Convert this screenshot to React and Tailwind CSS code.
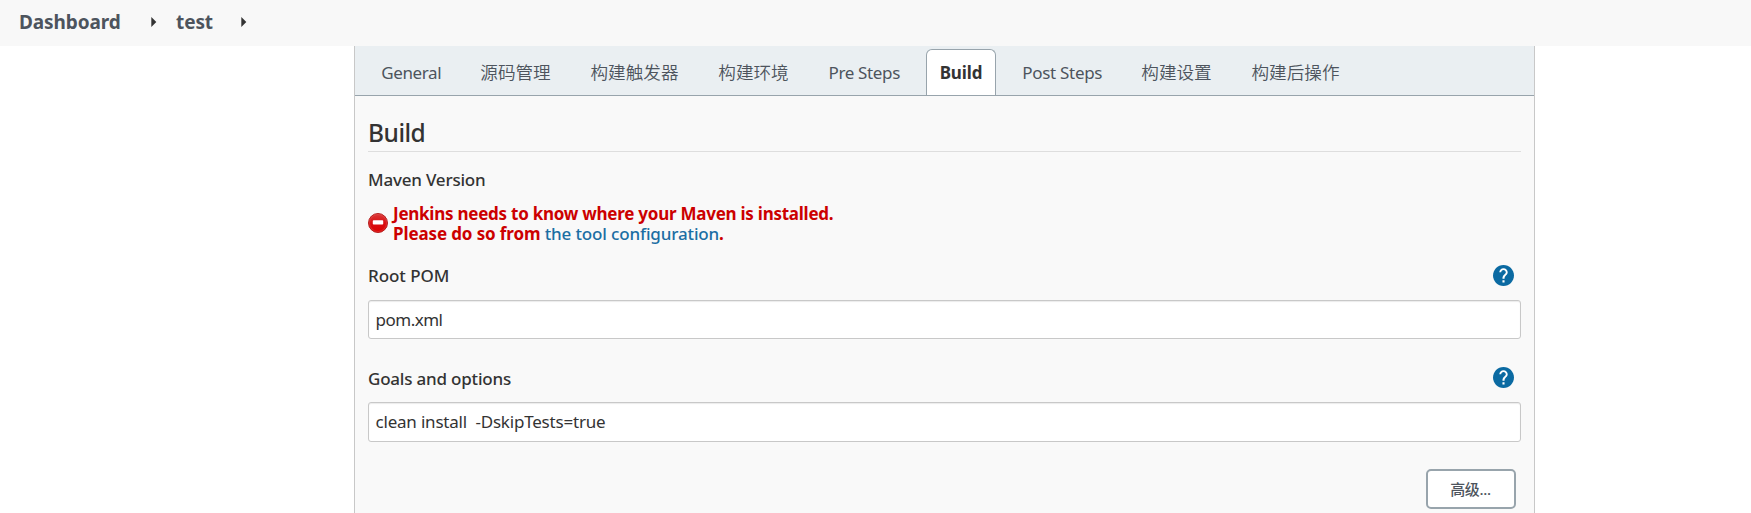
import clsx from "clsx";

const tabs = [
  { label: "General", width: "w-[88px]", tracking: "tracking-[-0.4px] pl-[1.5px]" },
  { label: "源码管理", width: "w-[98px]", cjk: true },
  { label: "构建触发器", width: "w-[116px]", cjk: true },
  { label: "构建环境", width: "w-[98px]", cjk: true },
  { label: "Pre Steps", width: "w-[99.5px]", tracking: "tracking-[-0.35px]" },
  { label: "Build", width: "w-[70px]", tracking: "tracking-[-0.1px]", active: true },
  { label: "Post Steps", width: "w-[107.5px]", tracking: "tracking-[-0.3px] pl-[1px]" },
  { label: "构建设置", width: "w-[98px]", cjk: true },
  { label: "构建后操作", width: "w-[116px]", cjk: true },
];

function Arrow() {
  return (
    <svg width="6" height="10" viewBox="0 0 6 10" className="mt-[-3px] shrink-0">
      <path d="M0.3 0 5.3 5 0.3 10Z" fill="#333" />
    </svg>
  );
}

function HelpIcon() {
  return (
    <svg width="21" height="21" viewBox="2 2 20 20" className="shrink-0">
      <path
        fill="#0b6aa2"
        d="M12 2C6.48 2 2 6.48 2 12s4.48 10 10 10 10-4.48 10-10S17.52 2 12 2z"
      />
      <path
        fill="#fff"
        d="M11 16.6h2v2h-2zM12 5c-2.21 0-4 1.79-4 4h1.8c0-1.2 1-2.2 2.2-2.2s2.2 1 2.2 2.2c0 2-3.2 2.2-3.2 6h2c0-2.8 3-3.3 3-6 0-2.21-1.79-4-4-4z"
      />
    </svg>
  );
}

function ErrorIcon() {
  return (
    <svg width="20" height="20" viewBox="0 0 20 20" className="shrink-0">
      <defs>
        <linearGradient id="err" x1="0" y1="0" x2="0" y2="1">
          <stop offset="0" stopColor="#dc3a3a" />
          <stop offset="0.5" stopColor="#d80f12" />
          <stop offset="1" stopColor="#dc0000" />
        </linearGradient>
      </defs>
      <circle cx="10" cy="10" r="9.5" fill="url(#err)" stroke="#b5211f" strokeWidth="1" />
      <circle cx="10" cy="10" r="8.5" fill="none" stroke="#e86464" strokeWidth="0.7" opacity="0.5" />
      <rect x="4.8" y="7.2" width="10.4" height="4.4" rx="0.8" fill="#fff" />
    </svg>
  );
}

function Field({ label, value, labelClass, valueClass, inputClass }) {
  return (
    <div>
      <div className="flex h-[21px] items-center justify-between pr-[7px]">
        <div className={clsx("text-[17px] leading-[20px] font-medium", labelClass)}>{label}</div>
        <HelpIcon />
      </div>
      <div
        className={clsx(
          "mt-[14px] flex items-center rounded-[3px] border border-[#c8c8c8] bg-white pl-[6.5px] text-[17px] whitespace-pre shadow-[inset_0_1px_1px_rgba(0,0,0,0.08)]",
          inputClass,
        )}
      >
        <span className={clsx("leading-[20px]", valueClass)}>{value}</span>
      </div>
    </div>
  );
}

export default function App() {
  return (
    <div className="flex h-[513px] flex-col overflow-hidden bg-white font-['Noto_Sans','Noto_Sans_CJK_SC',sans-serif] text-[#333]">
      <header className="flex h-[46px] shrink-0 items-center bg-[#f8f8f8] pl-[19px] text-[19px] leading-[24px] font-bold text-[#4d545d]">
        <span className="mt-[-3px] w-[132px] tracking-[-0.1px]">Dashboard</span>
        <Arrow />
        <span className="mt-[-3px] ml-[19px] w-[65px] tracking-[-0.1px]">test</span>
        <Arrow />
      </header>

      <main className="ml-[354px] flex w-[1181px] grow flex-col border-x border-[#c8c8c8] bg-[#f9f9f9]">
        <nav className="flex h-[50px] shrink-0 items-end border-b border-[#98a4ac] bg-[#eaeff2] pl-[11.5px]">
          {tabs.map((tab) => (
            <div key={tab.label} className="mr-[12px] flex last:mr-0">
              <div
                className={clsx(
                  "flex h-[46px] items-center justify-center rounded-t-[6px] border border-b-0 leading-[20px] whitespace-nowrap",
                  tab.width,
                  tab.tracking,
                  tab.cjk ? "pb-[2px] text-[17.6px] font-[350]" : "text-[17px]",
                  tab.active
                    ? "border-[#98a4ac] bg-white font-bold text-[#333]"
                    : "border-transparent text-[#4d545d]",
                )}
              >
                {tab.label}
              </div>
            </div>
          ))}
        </nav>

        <section className="flex flex-col px-[13px]">
          <h2 className="mt-[21px] h-[35px] border-b border-[#dedede] text-[24.5px] leading-[32px] font-medium tracking-[-0.5px]">
            Build
          </h2>
          <div className="mt-[18px] text-[17px] leading-[20px] font-medium tracking-[-0.2px]">
            Maven Version
          </div>
          <div className="mt-[13px] flex h-[40px] items-center text-[17px] leading-[20px] font-bold text-[#c00]">
            <ErrorIcon />
            <div className="pt-[1px] pl-[5px] whitespace-nowrap">
              <div className="tracking-[-0.25px]">Jenkins needs to know where your Maven is installed.</div>
              <div className="tracking-[-0.12px]">
                Please do so from{" "}
                <a className="font-medium tracking-[-0.15px] text-[#1b6ea3]">the tool configuration</a>.
              </div>
            </div>
          </div>
          <div className="mt-[22px]">
            <Field
              label="Root POM"
              value="pom.xml"
              labelClass="pt-[1px] tracking-[-0.05px]"
              valueClass="tracking-[-0.5px]"
              inputClass="h-[39px]"
            />
          </div>
          <div className="mt-[28px]">
            <Field
              label="Goals and options"
              value="clean install  -DskipTests=true"
              labelClass="pt-[3px] tracking-[-0.2px]"
              valueClass="tracking-[-0.2px]"
              inputClass="h-[40px]"
            />
          </div>
          <button className="mt-[27px] mr-[5px] h-[40px] w-[90px] self-end rounded-[5px] border-2 border-[#98a4ac] bg-white pr-[1px] text-[15px] leading-[20px] font-medium tracking-[-0.3px] text-[#4d545d]">
            高级...
          </button>
        </section>
      </main>
    </div>
  );
}
